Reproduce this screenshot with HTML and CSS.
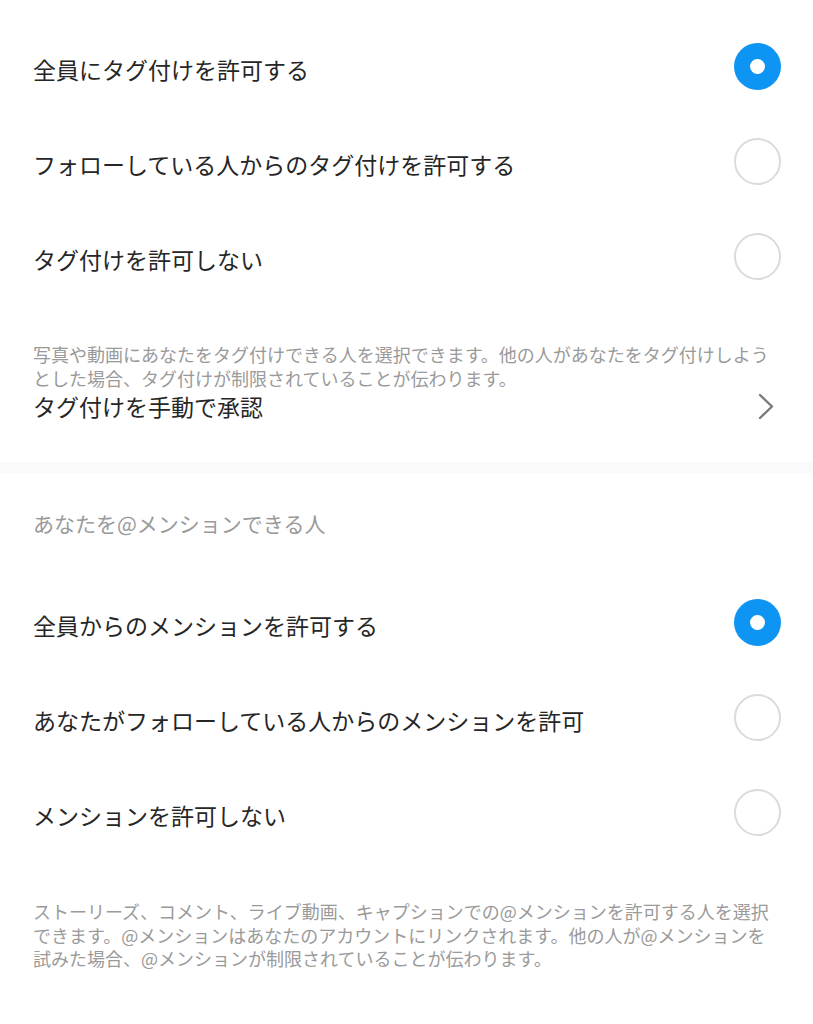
FILE: index.html
```html
<!DOCTYPE html>
<html lang="ja">
  <head>
    <meta charset="UTF-8" />
    <meta name="viewport" content="width=device-width, initial-scale=1.0" />
    <title>タグとメンション</title>
    <link rel="stylesheet" href="styles.css">
  </head>

  <body>
    <div class="page">
      <section class="group group-tags">
        <div class="option">
          <span class="label">全員にタグ付けを許可する</span>
          <span class="radio checked"></span>
        </div>
        <div class="option">
          <span class="label">フォローしている人からのタグ付けを許可する</span>
          <span class="radio"></span>
        </div>
        <div class="option">
          <span class="label">タグ付けを許可しない</span>
          <span class="radio"></span>
        </div>

        <p class="note">写真や動画にあなたをタグ付けできる人を選択できます。他の人があなたをタグ付けしようとした場合、タグ付けが制限されていることが伝わります。</p>

        <div class="link-row">
          <span class="label">タグ付けを手動で承認</span>
          <svg class="chevron" width="16" height="27" viewBox="0 0 16 27">
            <path d="M2 2 L14 13.5 L2 25" fill="none" stroke="#7a7a7a" stroke-width="2.4" stroke-linecap="round" stroke-linejoin="round" />
          </svg>
        </div>
      </section>

      <div class="divider"></div>

      <section class="group group-mentions">
        <h2 class="group-title">あなたを@メンションできる人</h2>

        <div class="option">
          <span class="label">全員からのメンションを許可する</span>
          <span class="radio checked"></span>
        </div>
        <div class="option">
          <span class="label">あなたがフォローしている人からのメンションを許可</span>
          <span class="radio"></span>
        </div>
        <div class="option">
          <span class="label">メンションを許可しない</span>
          <span class="radio"></span>
        </div>

        <p class="note">ストーリーズ、コメント、ライブ動画、キャプションでの@メンションを許可する人を選択できます。@メンションはあなたのアカウントにリンクされます。他の人が@メンションを試みた場合、@メンションが制限されていることが伝わります。</p>
      </section>
    </div>
  </body>
</html>
```

FILE: styles.css
```css
body {
  margin: 0;
  background-color: #ffffff;
  color: #262626;
  font-family: "Noto Sans CJK JP", "Noto Sans", sans-serif;
}

.page {
  width: 813px;
}

.group {
  padding: 0 33px 0 33px;
}

.group-tags {
  padding-top: 19px;
  padding-bottom: 41px;
}

.group-mentions {
  padding-top: 37px;
}

.option {
  display: flex;
  align-items: center;
  justify-content: space-between;
  height: 95px;
}

.label {
  font-size: 23px;
  line-height: 30px;
  padding-top: 5px;
}

.radio {
  width: 47px;
  height: 47px;
  box-sizing: border-box;
  border: 2px solid #dbdbdb;
  border-radius: 50%;
  margin-right: -1px;
  display: flex;
  align-items: center;
  justify-content: center;
}

.radio.checked {
  border: none;
  background-color: #0e95f4;
}

.radio.checked::after {
  content: "";
  width: 15px;
  height: 15px;
  border-radius: 50%;
  background-color: #ffffff;
}

.note {
  margin: 39px 0 0 0;
  font-size: 18px;
  line-height: 23.5px;
  color: #9a9a9a;
}

.group-mentions .note {
  margin-top: 40px;
}

.link-row {
  display: flex;
  align-items: center;
  justify-content: space-between;
  height: 30px;
  margin-top: 1px;
}

.link-row .label {
  padding-top: 0;
}

.chevron {
  margin-right: 6px;
}

.divider {
  height: 11px;
  background-color: #fafafa;
}

.group-title {
  margin: 0 0 39px 0;
  font-size: 21px;
  line-height: 26px;
  font-weight: normal;
  color: #9a9a9a;
}
```
